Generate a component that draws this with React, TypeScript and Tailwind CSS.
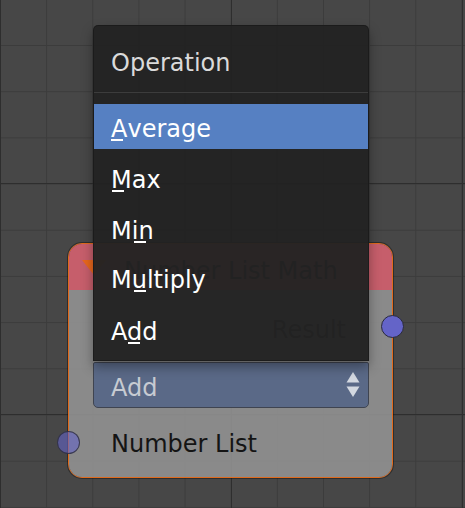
import React from "react";

const font = { fontFamily: '"DejaVu Sans", "Liberation Sans", sans-serif' };

function U({ c, left = 1 }: { c: string; left?: number }) {
  return (
    <span className="relative">
      {c}
      <span
        className="absolute bottom-[2px] h-[2px] w-[12px] bg-white"
        style={{ left }}
      />
    </span>
  );
}

export default function App() {
  return (
    <div
      className="relative w-[465px] h-[508px] overflow-hidden bg-[#474747] [background-image:linear-gradient(to_right,#2e2e2e_1px,transparent_1px),linear-gradient(to_bottom,#2e2e2e_1px,transparent_1px),linear-gradient(to_right,#3c3c3c_1px,transparent_1px),linear-gradient(to_bottom,#3c3c3c_1px,transparent_1px)] [background-size:231px_231px,231px_231px,46.15px_46.15px,46.2px_46.2px] [background-position:0px_0px,0px_183px,0px_0px,0px_45px]"
      style={font}
    >
      {/* Node */}
      <div className="absolute left-[68px] top-[243px] w-[325px] h-[235px] rounded-[14px] border-[1.5px] border-[#e06a1c] shadow-[0_0_0_1px_rgba(0,0,0,0.35)]">
        <div className="flex flex-col h-full rounded-[13px] overflow-hidden">
          <div className="h-[46px] shrink-0 bg-[#c65e6b] flex items-center">
            <svg width="26" height="18" viewBox="0 0 26 18" className="ml-[12px] mt-[2px]">
              <path d="M1 1 H25 L13 16 Z" fill="#e8671c" />
            </svg>
            <span className="ml-[17px] mt-[8px] text-[24px] text-[#1c1c1c] leading-none">Number List Math</span>
          </div>
          <div className="flex-1 bg-[#919191]/90 flex flex-col">
            <div className="h-[56px] mt-[12px] flex items-center justify-end pr-[46px] text-[24px] text-[#1c1c1c]">
              Result
            </div>
            <div className="mt-[4px] ml-[24px] mr-[23px] h-[46px] rounded-b-[5px] rounded-t-[2px] bg-[#5a6987] border border-[#3f4450] flex items-center justify-between pl-[17px] pr-[8px]">
              <span className="text-[24px] text-[#c7cbd2] pt-[5px]">Add</span>
              <svg width="14" height="28" viewBox="0 0 14 28">
                <path d="M7 1 L13.5 11.5 H0.5 Z" fill="#d3d8e0" />
                <path d="M0.5 15.5 H13.5 L7 26 Z" fill="#d3d8e0" />
              </svg>
            </div>
            <div className="flex-1 flex items-center pl-[42px] pt-[3px] text-[24px] text-[#141414]">
              Number List
            </div>
          </div>
        </div>
        {/* sockets */}
        <div className="absolute left-[312px] top-[71px] w-[23px] h-[23px] rounded-full bg-[#6464c8] border border-[#2b2b3a]" />
        <div className="absolute left-[-12px] top-[187px] w-[23px] h-[23px] rounded-full bg-[#6464c8]/60 border border-[#2b2b3a]/80" />
      </div>

      {/* Menu */}
      <div className="absolute left-[93px] top-[25px] w-[276px] h-[336px] rounded-t-[5px] bg-[#222222]/[0.96] border border-[#1a1a1a]/80 shadow-[0_6px_12px_rgba(0,0,0,0.35)] flex flex-col">
        <div className="h-[66px] shrink-0 flex items-center pl-[17px] pt-[8px] text-[24px] text-[#dadada]">
          Operation
        </div>
        <div className="h-px shrink-0 bg-[#3c3c3c]" />
        <div className="mt-[11px] flex flex-col text-[24px] text-white">
          <div className="h-[45px] bg-[#5680c2] flex items-center pl-[17px] pt-[4px] mb-[5px]">
            <span><U c="A" left={0} />verage</span>
          </div>
          <div className="h-[50px] flex items-center pl-[17px] pt-[2px]">
            <span><U c="M" left={1} />ax</span>
          </div>
          <div className="h-[50px] flex items-center pl-[17px] pt-[4px]">
            <span>M<U c="i" left={2} />n</span>
          </div>
          <div className="h-[50px] flex items-center pl-[17px] pt-[2px]">
            <span>M<U c="u" left={2} />ltiply</span>
          </div>
          <div className="h-[50px] flex items-center pl-[17px] pt-[6px]">
            <span>A<U c="d" left={1} />d</span>
          </div>
        </div>
      </div>
    </div>
  );
}
